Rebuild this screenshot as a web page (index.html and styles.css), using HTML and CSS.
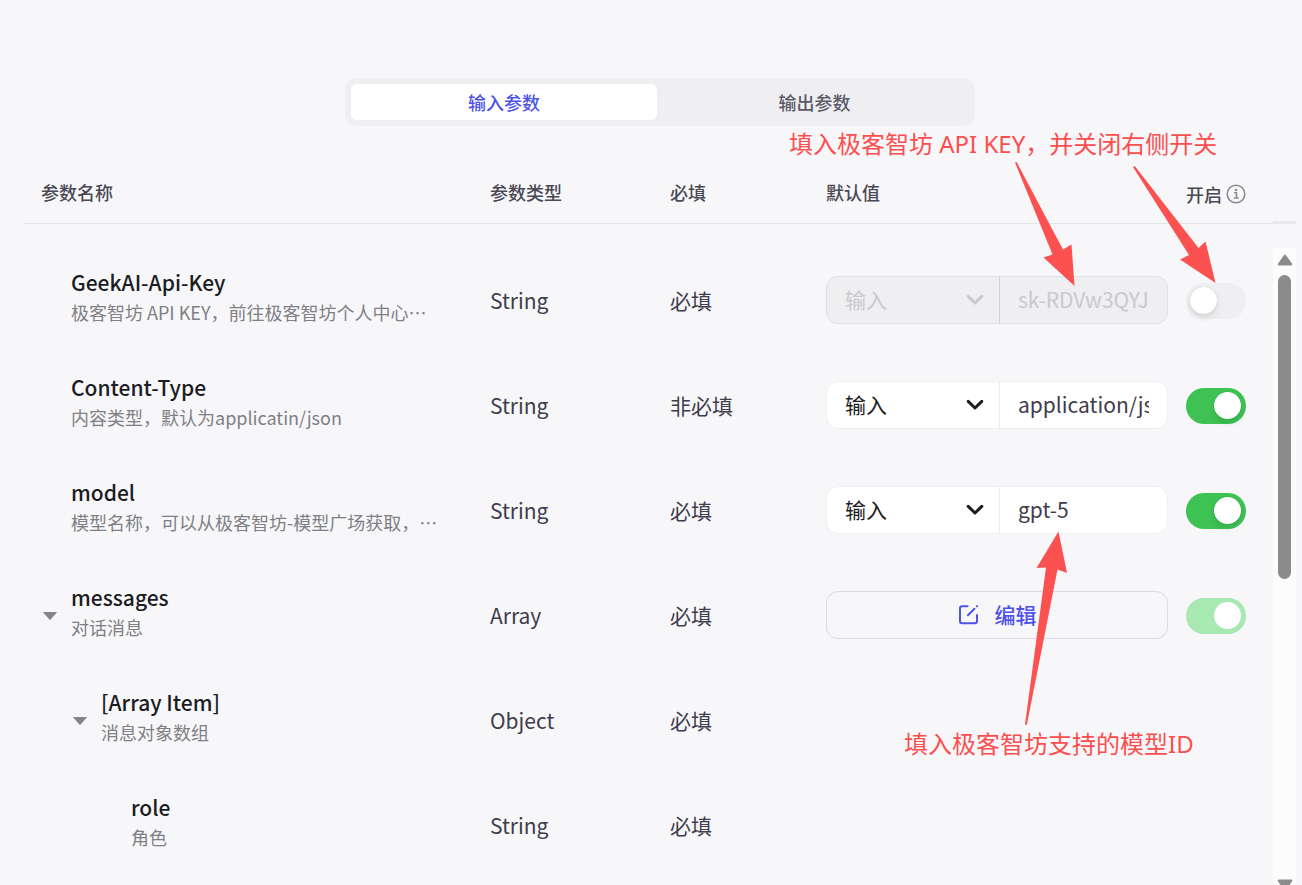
FILE: index.html
```html
<!DOCTYPE html>
<html lang="zh-CN">
<head>
<meta charset="utf-8">
<title>参数配置</title>
<link rel="stylesheet" href="styles.css">
</head>
<body>
<main class="page">
  <div class="tabs" role="tablist">
    <button class="tab tab-active" role="tab" aria-selected="true" type="button">输入参数</button>
    <button class="tab" role="tab" aria-selected="false" type="button">输出参数</button>
  </div>

  <div class="panel">
    <table class="params">
      <colgroup>
        <col><col class="col-type"><col class="col-required"><col class="col-default"><col class="col-switch">
      </colgroup>
      <thead>
        <tr>
          <th class="name-head">参数名称</th>
          <th>参数类型</th>
          <th>必填</th>
          <th>默认值</th>
          <th>
            <span class="enable-head">开启
              <svg class="info" viewBox="0 0 20 20" aria-hidden="true"><circle cx="10" cy="10" r="8.8"/><path d="M8.2 8.8H10.4V13.8M7.8 14H12.8"/><circle class="dot" cx="10" cy="6" r="1.3"/></svg>
            </span>
          </th>
        </tr>
      </thead>
      <tbody>
        <tr>
          <td><div class="name"><div class="name-text"><div class="title">GeekAI-Api-Key</div><div class="desc">极客智坊 API KEY，前往极客智坊个人中心…</div></div></div></td>
          <td>String</td>
          <td>必填</td>
          <td>
            <div class="field field-disabled">
              <div class="picker">
                <select aria-label="GeekAI-Api-Key 来源" disabled><option>输入</option></select>
                <svg class="chevron" viewBox="0 0 18 12" aria-hidden="true"><path d="M2.2 2.4L9 9L15.8 2.4"/></svg>
              </div>
              <input type="text" aria-label="GeekAI-Api-Key 默认值" value="sk-RDVw3QYJ" disabled>
            </div>
          </td>
          <td><input class="switch" type="checkbox" aria-label="开启 GeekAI-Api-Key"></td>
        </tr>
        <tr>
          <td><div class="name"><div class="name-text"><div class="title">Content-Type</div><div class="desc">内容类型，默认为applicatin/json</div></div></div></td>
          <td>String</td>
          <td>非必填</td>
          <td>
            <div class="field">
              <div class="picker">
                <select aria-label="Content-Type 来源"><option>输入</option></select>
                <svg class="chevron" viewBox="0 0 18 12" aria-hidden="true"><path d="M2.2 2.4L9 9L15.8 2.4"/></svg>
              </div>
              <input type="text" aria-label="Content-Type 默认值" value="application/json">
            </div>
          </td>
          <td><input class="switch" type="checkbox" aria-label="开启 Content-Type" checked></td>
        </tr>
        <tr>
          <td><div class="name"><div class="name-text"><div class="title">model</div><div class="desc">模型名称，可以从极客智坊-模型广场获取，…</div></div></div></td>
          <td>String</td>
          <td>必填</td>
          <td>
            <div class="field">
              <div class="picker">
                <select aria-label="model 来源"><option>输入</option></select>
                <svg class="chevron" viewBox="0 0 18 12" aria-hidden="true"><path d="M2.2 2.4L9 9L15.8 2.4"/></svg>
              </div>
              <input type="text" aria-label="model 默认值" value="gpt-5">
            </div>
          </td>
          <td><input class="switch" type="checkbox" aria-label="开启 model" checked></td>
        </tr>
        <tr>
          <td><div class="name"><button class="caret" type="button" aria-label="收起 messages"><svg viewBox="0 0 14 8" aria-hidden="true"><path d="M0.6 0H13.4Q14 0.4 13.4 1L7.6 7.6Q7 8.2 6.4 7.6L0.6 1Q0 0.4 0.6 0Z"/></svg></button><div class="name-text"><div class="title">messages</div><div class="desc">对话消息</div></div></div></td>
          <td>Array</td>
          <td>必填</td>
          <td>
            <button class="edit" type="button">
              <svg viewBox="0 0 21 21" aria-hidden="true"><path d="M9.6 2.2H4.2Q2 2.2 2 4.4V17Q2 19.2 4.2 19.2H16.8Q19 19.2 19 17V11"/><path d="M10 11.2L16.4 4.8"/><path d="M18.9 2.3L19.1 2.1"/></svg>
              编辑
            </button>
          </td>
          <td><input class="switch" type="checkbox" aria-label="开启 messages" checked disabled></td>
        </tr>
        <tr>
          <td><div class="name level-1"><button class="caret" type="button" aria-label="收起 Array Item"><svg viewBox="0 0 14 8" aria-hidden="true"><path d="M0.6 0H13.4Q14 0.4 13.4 1L7.6 7.6Q7 8.2 6.4 7.6L0.6 1Q0 0.4 0.6 0Z"/></svg></button><div class="name-text"><div class="title">[Array Item]</div><div class="desc">消息对象数组</div></div></div></td>
          <td>Object</td>
          <td>必填</td>
          <td></td>
          <td></td>
        </tr>
        <tr>
          <td><div class="name level-2"><div class="name-text"><div class="title">role</div><div class="desc">角色</div></div></div></td>
          <td>String</td>
          <td>必填</td>
          <td></td>
          <td></td>
        </tr>
      </tbody>
    </table>

    <div class="rail" aria-hidden="true">
      <div class="rail-head"></div>
      <div class="scrollbar">
        <svg class="arrow" viewBox="0 0 16 12"><path d="M6.8 1.4Q8 -0.2 9.2 1.4L14.9 9.4Q15.8 11.4 14 11.4H2Q0.2 11.4 1.1 9.4Z"/></svg>
        <div class="thumb"></div>
        <svg class="arrow arrow-down" viewBox="0 0 16 12"><path d="M6.8 10.6Q8 12.2 9.2 10.6L14.9 2.6Q15.8 0.6 14 0.6H2Q0.2 0.6 1.1 2.6Z"/></svg>
      </div>
    </div>
  </div>

  <div class="notes">
    <svg class="arrows" viewBox="0 0 1302 885" aria-hidden="true">
      <path d="M1015 162.5L1016.6 162L1063 249.5L1071.5 244.5L1074.5 286L1043.5 257.5L1052.5 254.5Z"/>
      <path d="M1133 167L1134.8 166L1198.5 248L1205.5 241.5L1215.5 283L1180 259.5L1189 255Z"/>
      <path d="M1025 724.5L1026.8 725L1057.5 569.5L1067 573L1058.5 531.5L1036.5 568L1046 567.5Z"/>
    </svg>
    <p class="note note-key">填入极客智坊 API KEY，并关闭右侧开关</p>
    <p class="note note-model">填入极客智坊支持的模型ID</p>
  </div>
</main>
</body>
</html>
```
FILE: styles.css
```css
* {
  box-sizing: border-box;
}

body {
  margin: 0;
  background: #f7f7fa;
  color: #3f3c4b;
  font: 400 21px/30px "Noto Sans CJK SC", sans-serif;
}

button,
input,
select {
  margin: 0;
  font: inherit;
  color: inherit;
}

.page {
  position: relative;
  display: flex;
  flex-direction: column;
  height: 100vh;
  padding: 78px 6px 0 24px;
  overflow: hidden;
}

/* Tabs */
.tabs {
  display: grid;
  grid-template-columns: 1fr 1fr;
  align-self: center;
  width: 630px;
  max-width: 100%;
  padding: 6px;
  border-radius: 12px;
  background: #efeff1;
}

.tab {
  height: 36px;
  padding: 0;
  border: 0;
  border-radius: 6px;
  background: transparent;
  color: #5c5a68;
  font-size: 18px;
  font-weight: 500;
}

.tab-active {
  margin-right: 3px;
  background: #fff;
  color: #4d53e8;
}

/* Table */
.panel {
  display: flex;
  flex: 1;
  margin-top: 38px;
}

.params {
  flex: 1;
  align-self: flex-start;
  width: 100%;
  table-layout: fixed;
  border-collapse: collapse;
}

.col-type { width: 180px; }
.col-required { width: 156px; }
.col-default { width: 360px; }
.col-switch { width: 87px; }

th {
  height: 59px;
  padding: 0 0 2px;
  border-bottom: 1px solid #e3e3e7;
  text-align: left;
  color: #4a4854;
  font-size: 18px;
  font-weight: 500;
}

.name-head {
  padding-left: 17px;
}

.enable-head {
  display: flex;
  align-items: center;
  gap: 4px;
  padding-top: 3px;
}

.info {
  width: 20px;
  height: 20px;
  fill: none;
  stroke: #8b8a92;
  stroke-width: 1.6;
}

.info .dot {
  fill: #8b8a92;
  stroke: none;
}

tbody::before {
  content: "";
  display: block;
  height: 24px;
}

td {
  height: 105px;
  padding: 0;
}

td:last-child {
  padding-top: 1px;
}

.name {
  display: flex;
  align-items: center;
  justify-content: flex-start;
  padding-left: 47px;
  white-space: nowrap;
}

.level-1 { padding-left: 77px; }
.level-2 { padding-left: 107px; }

.name-text {
  padding-bottom: 6px;
}

.title {
  color: #1c1c23;
  font-weight: 500;
}

.desc {
  color: #7f7f85;
  font-size: 18px;
}

.caret {
  display: flex;
  width: 14px;
  margin-left: -28px;
  margin-right: 14px;
  padding: 2px 0 0;
  border: 0;
  background: none;
}

.caret svg {
  width: 14px;
  height: 8px;
  fill: #86858d;
}

/* Value field */
.field {
  display: flex;
  width: calc(100% - 18px);
  height: 48px;
  border: 1px solid #efeff2;
  border-radius: 12px;
  background: #fff;
  overflow: hidden;
}

.picker {
  position: relative;
  flex: 0 0 173px;
  border-right: 1px solid #ebebee;
  color: #1c1c23;
}

.picker select {
  width: 100%;
  height: 100%;
  padding: 0 18px 2px;
  border: 0;
  background: transparent;
  appearance: none;
}

.chevron {
  position: absolute;
  top: 17px;
  right: 15px;
  width: 18px;
  height: 12px;
  fill: none;
  stroke: currentColor;
  stroke-width: 3;
  stroke-linecap: round;
  stroke-linejoin: round;
  pointer-events: none;
}

.field input {
  flex: 1;
  min-width: 0;
  margin: 0 18px;
  padding: 0 0 2px;
  border: 0;
  outline: 0;
  background: transparent;
}

.field-disabled {
  border-color: #e0e0e4;
  background: #efeff1;
}

.field-disabled .picker {
  border-color: #d2d2d6;
}

.field-disabled .picker,
.field-disabled input {
  color: #c9c9ce;
}

.field-disabled select {
  opacity: 1;
}

.edit {
  display: flex;
  align-items: center;
  justify-content: center;
  gap: 16px;
  width: calc(100% - 18px);
  height: 48px;
  padding: 0 0 2px;
  border: 1px solid #dcdce0;
  border-radius: 12px;
  background: transparent;
  color: #4d53e8;
  font-weight: 500;
}

.edit svg {
  width: 21px;
  height: 21px;
  fill: none;
  stroke: currentColor;
  stroke-width: 2;
  stroke-linecap: round;
}

/* Switch */
.switch {
  display: flex;
  align-items: center;
  width: 60px;
  height: 36px;
  padding: 0 5px 1px 4px;
  border-radius: 18px;
  background: #efeff1;
  appearance: none;
}

.switch::before {
  content: "";
  width: 27px;
  height: 27px;
  border-radius: 50%;
  background: #fff;
  box-shadow: 0 4px 6px rgba(0, 0, 0, 0.1), 0 0 1px rgba(0, 0, 0, 0.2);
}

.switch:checked {
  justify-content: flex-end;
  background: #3ec254;
}

.switch:checked:disabled {
  background: #a8e9b2;
}

.switch:disabled::before {
  box-shadow: none;
}

/* Scrollbar */
.rail {
  display: flex;
  flex: 0 0 23px;
  flex-direction: column;
  margin-bottom: -12px;
}

.rail-head {
  height: 60px;
  border-bottom: 3px solid #e8e8eb;
}

.scrollbar {
  display: flex;
  flex: 1;
  flex-direction: column;
  align-items: center;
  margin-top: 24px;
  padding: 6px 0;
  background: #fcfcfc;
}

.arrow {
  width: 16px;
  height: 12px;
  fill: #8b8b8b;
}

.thumb {
  width: 13px;
  height: 304px;
  margin-top: 9px;
  border-radius: 7px;
  background: #8b8b8b;
}

.arrow-down {
  margin-top: auto;
}

/* Annotations */
.notes {
  position: absolute;
  inset: 0;
  pointer-events: none;
}

.arrows {
  position: absolute;
  top: 0;
  left: 0;
  width: 1302px;
  height: 885px;
  fill: #fb5151;
}

.note {
  position: absolute;
  margin: 0;
  color: #fb4f4f;
  font: 400 24px/32px "Noto Sans", "Noto Sans CJK SC", sans-serif;
  white-space: nowrap;
}

.note-key {
  top: 128px;
  left: 789px;
}

.note-model {
  top: 728px;
  left: 904px;
}
```
